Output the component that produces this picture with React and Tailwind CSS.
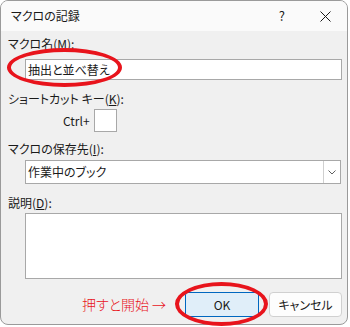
import React from 'react';

const jp = {
  fontFamily: '"Noto Sans CJK JP", "Noto Sans", sans-serif',
};

// アクセスキー付きラベル
const Label = ({ text, k, className = '' }) => (
  <div className={`text-[12px] leading-[14px] text-[#1a1a1a] [font-feature-settings:'palt'] ${className}`}>
    {text}(<span className="underline underline-offset-[1px]">{k}</span>):
  </div>
);

const App = () => {
  return (
    <div className="relative w-[350px] h-[327px] bg-white overflow-hidden" style={jp}>
      <div className="w-[348px] h-[325px] border border-[#9a9a9a] rounded-[8px] overflow-hidden flex flex-col bg-[#f0f0f0]">
        {/* タイトルバー */}
        <div className="h-[30px] bg-[#fafafa] flex items-center pl-[10px] shrink-0">
          <span className="text-[12px] text-[#1a1a1a] [font-feature-settings:'palt']">マクロの記録</span>
          <span className="ml-auto mr-[35px] text-[13px] text-[#1a1a1a]">?</span>
          <svg width="11" height="11" viewBox="0 0 11 11" className="mr-[16px]">
            <path d="M0.5 0.5 L10.5 10.5 M10.5 0.5 L0.5 10.5" stroke="#1a1a1a" strokeWidth="1" fill="none" />
          </svg>
        </div>

        {/* 本体 */}
        <div className="flex-1 flex flex-col pl-[7px] pr-[5px]">
          <Label text="マクロ名" k="M" className="mt-[6px]" />
          <div className="mt-[8px] ml-[17px] h-[21px] bg-white border border-[#a8a8a8] flex items-center pl-[2px]">
            <span className="text-[12px] text-[#1a1a1a] [font-feature-settings:'palt']">抽出と並べ替え</span>
          </div>

          <Label text="ショートカット キー" k="K" className="mt-[12px]" />
          <div className="mt-[3px] flex items-center">
            <span className="ml-[55px] text-[12px] text-[#1a1a1a]">Ctrl+</span>
            <div className="ml-[4px] w-[23px] h-[23px] bg-white border border-[#a8a8a8]" />
          </div>

          <Label text="マクロの保存先" k="I" className="mt-[10px]" />
          <div className="mt-[4px] ml-[17px] mr-[1px] h-[24px] bg-white border border-[#a8a8a8] flex items-center">
            <span className="pl-[2px] text-[12px] text-[#1a1a1a] [font-feature-settings:'palt']">作業中のブック</span>
            <div className="ml-auto h-full w-[17px] border-l border-[#d0d0d0] flex items-center justify-center">
              <svg width="8" height="5" viewBox="0 0 8 5">
                <path d="M0.5 0.5 L4 4 L7.5 0.5" stroke="#606060" strokeWidth="1" fill="none" />
              </svg>
            </div>
          </div>

          <Label text="説明" k="D" className="mt-[12px]" />
          <div className="mt-[3px] ml-[17px] h-[66px] bg-white border border-[#a8a8a8]" />

          <div className="mt-[13px] flex items-center justify-end">
            <span className="text-[14px] font-light text-[#e8141c] mr-[19px] [font-feature-settings:'palt']">押すと開始 →</span>
            <div className="w-[74px] h-[25px] bg-[#e0eef9] border border-[#0067c0] rounded-[3px] flex items-center justify-center text-[12px] text-[#1a1a1a]">
              OK
            </div>
            <div className="ml-[10px] w-[73px] h-[25px] bg-[#fdfdfd] border border-[#d0d0d0] rounded-[4px] flex items-center justify-center text-[12px] text-[#1a1a1a] [font-feature-settings:'palt']">
              キャンセル
            </div>
          </div>
        </div>
      </div>

      {/* 赤い丸の注釈 */}
      <div className="absolute left-[7px] top-[48px] w-[115px] h-[39px] border-[4px] border-[#e8141c] rounded-[50%]" />
      <div className="absolute left-[175px] top-[282px] w-[93px] h-[44px] border-[4px] border-[#e8141c] rounded-[50%]" />
    </div>
  );
};

export default App;
